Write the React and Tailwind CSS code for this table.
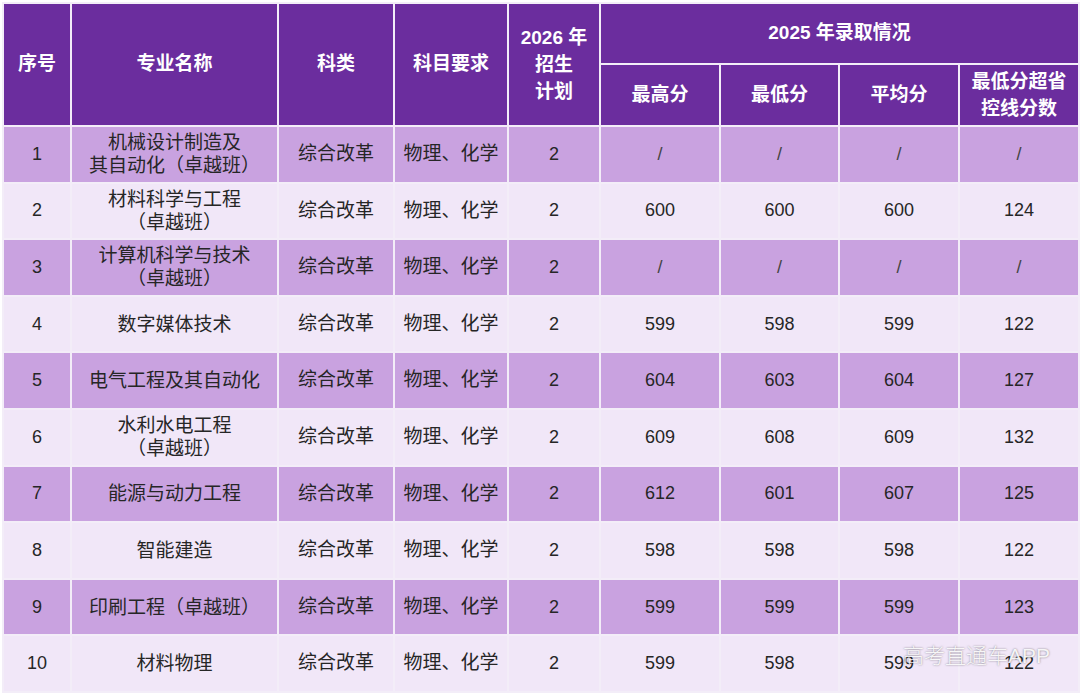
const rows = [
  { no: "1", name: ["机械设计制造及", "其自动化（卓越班）"], s: ["/", "/", "/", "/"] },
  { no: "2", name: ["材料科学与工程", "（卓越班）"], s: ["600", "600", "600", "124"] },
  { no: "3", name: ["计算机科学与技术", "（卓越班）"], s: ["/", "/", "/", "/"] },
  { no: "4", name: ["数字媒体技术"], s: ["599", "598", "599", "122"] },
  { no: "5", name: ["电气工程及其自动化"], s: ["604", "603", "604", "127"] },
  { no: "6", name: ["水利水电工程", "（卓越班）"], s: ["609", "608", "609", "132"] },
  { no: "7", name: ["能源与动力工程"], s: ["612", "601", "607", "125"] },
  { no: "8", name: ["智能建造"], s: ["598", "598", "598", "122"] },
  { no: "9", name: ["印刷工程（卓越班）"], s: ["599", "599", "599", "123"] },
  { no: "10", name: ["材料物理"], s: ["599", "598", "599", "122"] },
]

const font = { fontFamily: '"Liberation Sans", "Noto Sans CJK SC", sans-serif' }

export default function App() {
  return (
    <div className="w-[1080px] h-[695px] bg-white relative p-[2px]" style={font}>
      <table className="w-[1076px] table-fixed border-collapse text-center">
        <colgroup>
          <col className="w-[68px]" />
          <col className="w-[207px]" />
          <col className="w-[116px]" />
          <col className="w-[114px]" />
          <col className="w-[92px]" />
          <col className="w-[120px]" />
          <col className="w-[119px]" />
          <col className="w-[120px]" />
          <col className="w-[120px]" />
        </colgroup>
        <thead className="bg-[#6b2d9e] text-white font-bold text-[19px]">
          <tr className="h-[61px]">
            <th rowSpan={2} className="border-2 border-[#f3edf8]">序号</th>
            <th rowSpan={2} className="border-2 border-[#f3edf8]">专业名称</th>
            <th rowSpan={2} className="border-2 border-[#f3edf8]">科类</th>
            <th rowSpan={2} className="border-2 border-[#f3edf8]">科目要求</th>
            <th rowSpan={2} className="border-2 border-[#f3edf8] leading-[27px]">
              2026 年<br />招生<br />计划
            </th>
            <th colSpan={4} className="border-2 border-[#f3edf8]">2025 年录取情况</th>
          </tr>
          <tr className="h-[62px]">
            <th className="border-2 border-[#f3edf8]">最高分</th>
            <th className="border-2 border-[#f3edf8]">最低分</th>
            <th className="border-2 border-[#f3edf8]">平均分</th>
            <th className="border-2 border-[#f3edf8] leading-[27px]">
              最低分超省<br />控线分数
            </th>
          </tr>
        </thead>
        <tbody className="text-[19px] text-[#262626]">
          {rows.map((r, i) => (
            <tr key={r.no} className={i % 2 === 0 ? "h-[56.6px] bg-[#c9a2e0]" : "h-[56.6px] bg-[#f1e7f8]"}>
              <td className="border-2 border-[#f3edf8] text-[18px]">{r.no}</td>
              <td className="border-2 border-[#f3edf8] leading-[23px]">
                {r.name.map((n, k) => (
                  <div key={k}>{n}</div>
                ))}
              </td>
              <td className="border-2 border-[#f3edf8]">综合改革</td>
              <td className="border-2 border-[#f3edf8]">物理、化学</td>
              <td className="border-2 border-[#f3edf8] text-[18px]">2</td>
              {r.s.map((v, k) => (
                <td key={k} className="border-2 border-[#f3edf8] text-[18px]">
                  {v === "/" ? <span className="text-[#444] font-light">/</span> : v}
                </td>
              ))}
            </tr>
          ))}
        </tbody>
      </table>
      <div
        className="absolute left-[903px] top-[640px] text-[21px] text-white/90 font-light"
        style={{ textShadow: "0 0 2px rgba(0,0,0,0.5)" }}
      >
        高考直通车APP
      </div>
    </div>
  )
}
